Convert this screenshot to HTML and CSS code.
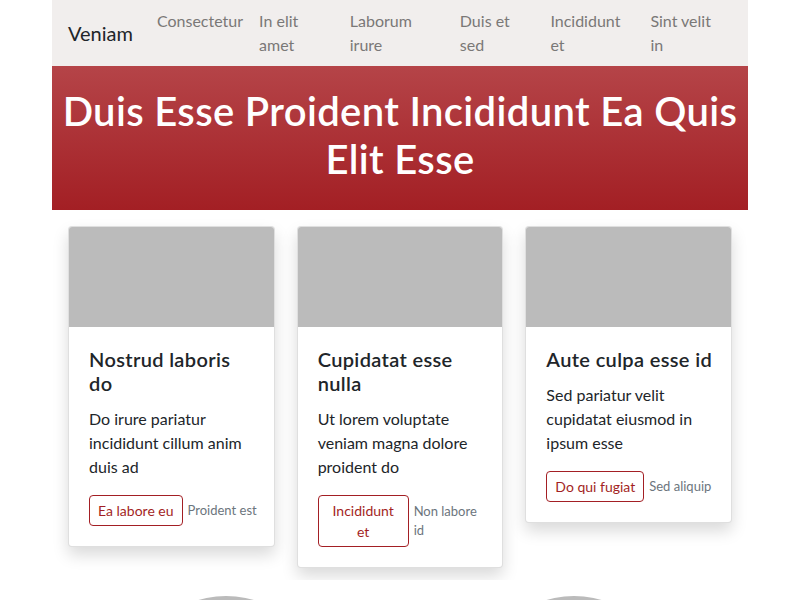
FILE: index.html
```html
<!DOCTYPE html>
<html lang="en">
<head>
<meta charset="utf-8">
<title>Veniam</title>
<link rel="stylesheet" href="styles.css">
</head>
<body>
<div class="container">
  <nav class="navbar">
    <a class="brand" href="#">Veniam</a>
    <ul class="nav-links">
      <li><a href="#">Consectetur</a></li>
      <li><a href="#">In elit amet</a></li>
      <li><a href="#">Laborum irure</a></li>
      <li><a href="#">Duis et sed</a></li>
      <li><a href="#">Incididunt et</a></li>
      <li><a href="#">Sint velit in</a></li>
    </ul>
  </nav>
  <header class="hero">
    <h1>Duis Esse Proident Incididunt Ea Quis Elit Esse</h1>
  </header>
  <section class="cards-wrap">
    <div class="cards">
      <article class="card">
        <div class="card-img"></div>
        <div class="card-body">
          <h5 class="card-title">Nostrud laboris do</h5>
          <p class="card-text">Do irure pariatur incididunt cillum anim duis ad</p>
          <div class="card-actions">
            <a class="btn" href="#">Ea labore eu</a>
            <a class="muted" href="#">Proident est</a>
          </div>
        </div>
      </article>
      <article class="card">
        <div class="card-img"></div>
        <div class="card-body">
          <h5 class="card-title">Cupidatat esse nulla</h5>
          <p class="card-text">Ut lorem voluptate veniam magna dolore proident do</p>
          <div class="card-actions">
            <a class="btn" href="#">Incididunt et</a>
            <a class="muted" href="#">Non labore id</a>
          </div>
        </div>
      </article>
      <article class="card">
        <div class="card-img"></div>
        <div class="card-body">
          <h5 class="card-title">Aute culpa esse id</h5>
          <p class="card-text">Sed pariatur velit cupidatat eiusmod in ipsum esse</p>
          <div class="card-actions">
            <a class="btn" href="#">Do qui fugiat</a>
            <a class="muted" href="#">Sed aliquip</a>
          </div>
        </div>
      </article>
    </div>
  </section>
  <section class="avatars">
    <div class="avatar-col"><div class="avatar"></div></div>
    <div class="avatar-col"><div class="avatar"></div></div>
  </section>
</div>
</body>
</html>
```

FILE: styles.css
```css
* { box-sizing: border-box; }
html, body { margin: 0; padding: 0; }
body {
  font-family: Lato, "Open Sans", "Liberation Sans", sans-serif;
  font-size: 16px;
  line-height: 1.5;
  color: #212529;
  background: #fff;
}
.container {
  width: 696px;
  margin: 0 auto;
}
.navbar {
  display: flex;
  align-items: center;
  background: #f1eeed;
  padding: 9px 16px;
  min-height: 66px;
}
.brand {
  font-size: 20px;
  color: #212529;
  text-decoration: none;
  margin-right: 16px;
  white-space: nowrap;
}
.nav-links {
  display: flex;
  list-style: none;
  margin: 0;
  padding: 0;
  flex: 1 1 auto;
}
.nav-links a {
  display: block;
  padding: 0 8px;
  color: #7a7877;
  text-decoration: none;
  line-height: 24px;
}
.hero {
  background: linear-gradient(#b54448, #a31f24);
  padding: 21px 8px 27px;
  text-align: center;
}
.hero h1 {
  margin: 0;
  color: #fff;
  font-size: 40px;
  font-weight: 600;
  line-height: 48px;
  letter-spacing: 0.35px;
}
.cards-wrap {
  overflow: hidden;
  padding: 16px 16px 12px;
}
.cards {
  display: grid;
  grid-template-columns: repeat(3, 1fr);
  column-gap: 22px;
  align-items: start;
}
.card {
  background: #fff;
  border: 1px solid rgba(0,0,0,.125);
  border-radius: 4px;
  box-shadow: 0 8px 16px rgba(0,0,0,.15);
  overflow: hidden;
}
.card-img {
  height: 100px;
  background: #bbbbbb;
}
.card-body {
  padding: 20px 16px 20px 20px;
}
.card-title {
  margin: 0 0 12px;
  font-size: 20px;
  font-weight: 600;
  line-height: 24px;
  letter-spacing: 0.35px;
}
.card-text {
  margin: 0 0 16px;
}
.card-actions {
  display: flex;
  align-items: center;
  gap: 5px;
}
.btn {
  border: 1px solid #a31f24;
  border-radius: 4px;
  color: #a31f24;
  text-decoration: none;
  font-size: 14px;
  line-height: 21px;
  padding: 4px 8px;
  text-align: center;
}
.muted {
  color: #6c757d;
  text-decoration: none;
  font-size: 13px;
  line-height: 19.5px;
}
.avatars {
  display: grid;
  grid-template-columns: 1fr 1fr;
  margin-top: 16px;
}
.avatar-col {
  display: flex;
  justify-content: center;
}
.avatar {
  width: 200px;
  height: 200px;
  border-radius: 50%;
  background: #bbbbbb;
}
```
